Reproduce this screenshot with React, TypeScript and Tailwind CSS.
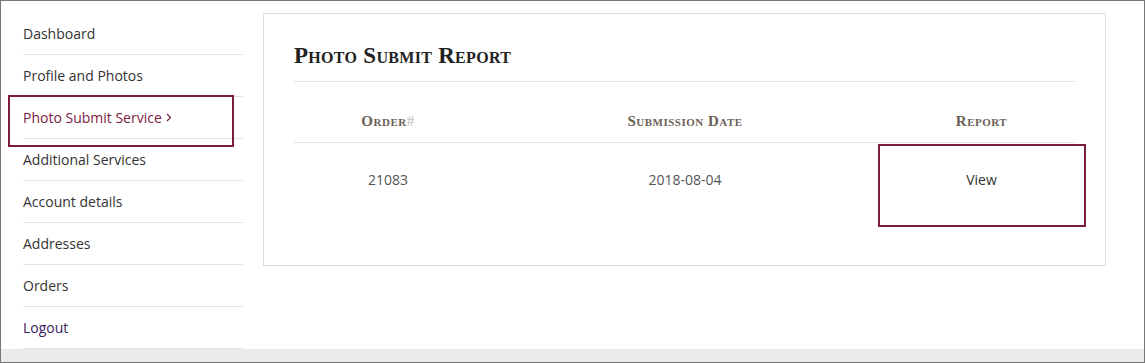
import React from "react";

const menu = [
  "Dashboard",
  "Profile and Photos",
  "Photo Submit Service",
  "Additional Services",
  "Account details",
  "Addresses",
  "Orders",
  "Logout",
];

function Sidebar() {
  return (
    <ul className="w-[220px] ml-[22px] pt-[12px] shrink-0">
      {menu.map((item) => {
        const active = item === "Photo Submit Service";
        return (
          <li
            key={item}
            className="relative h-[42px] border-b border-[#e2e2e2] flex items-center"
          >
            <span
              className={
                "text-[14px] flex items-center gap-[4px] " +
                (active
                  ? "text-[#7b1c3f]"
                  : item === "Logout"
                  ? "text-[#3c1e5c]"
                  : "text-[#333333]")
              }
            >
              {item}
              {active && (
                <svg width="6" height="9" viewBox="0 0 6 9" fill="none">
                  <path d="M1 1l3.5 3.5L1 8" stroke="#7b1c3f" strokeWidth="1.2" />
                </svg>
              )}
            </span>
            {active && (
              <div className="absolute left-[-15px] top-[-2px] w-[226px] h-[52px] border-2 border-[#7b1c3f]" />
            )}
          </li>
        );
      })}
    </ul>
  );
}

function ReportCard() {
  return (
    <div className="ml-[20px] mt-[12px] w-[843px] h-[253px] border border-[#dedede] px-[30px] pt-[27px]">
      <h2
        className="font-['Liberation_Serif',serif] font-bold text-[23px] tracking-[0.3px] leading-[30px] text-[#222] pb-[10px] border-b border-[#e2e2e2]"
        style={{ fontVariant: "small-caps" }}
      >
        Photo Submit Report
      </h2>
      <div className="mt-[20px]">
        <div
          className="grid grid-cols-[188px_406px_187px] h-[41px] items-center border-b border-[#e2e2e2] pb-[1px] font-['Liberation_Serif',serif] font-bold text-[15px] tracking-[0.5px] text-[#6b5e55]"
          style={{ fontVariant: "small-caps" }}
        >
          <div className="text-center">
            Order<span className="font-normal text-[#bbb]">#</span>
          </div>
          <div className="text-center">Submission Date</div>
          <div className="text-center">Report</div>
        </div>
        <div className="grid grid-cols-[188px_406px_187px] h-[72px] items-center text-[14px] text-[#555]">
          <div className="text-center">21083</div>
          <div className="text-center">2018-08-04</div>
          <div className="relative h-full flex items-center justify-center text-[#333]">
            View
            <div className="absolute left-[-10px] top-[1px] w-[208px] h-[83px] border-2 border-[#7b1c3f]" />
          </div>
        </div>
      </div>
    </div>
  );
}

export default function App() {
  return (
    <div className="w-[1145px] h-[363px] border border-[#777] bg-white flex flex-col font-['Open_Sans',sans-serif] overflow-hidden">
      <div className="flex h-[348px]">
        <Sidebar />
        <ReportCard />
      </div>
      <div className="h-[13px] bg-[#ebebeb]" />
    </div>
  );
}
